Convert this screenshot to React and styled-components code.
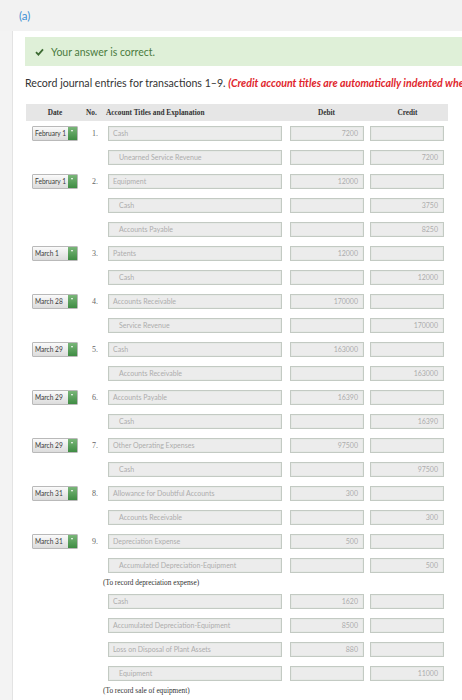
import React from "react";
import styled, { createGlobalStyle } from "styled-components";

const Global = createGlobalStyle`
  html, body { margin: 0; padding: 0; background: #f3f3f3; }
  body { font-family: Lato, "Open Sans", sans-serif; width: 462px; height: 700px; overflow: hidden; }
`;

const Page = styled.div`
  width: 462px;
  height: 700px;
  overflow: hidden;
  display: flex;
  flex-direction: column;
`;

const TopBand = styled.div`
  height: 31px;
  flex: none;
  display: flex;
  align-items: center;
  padding-left: 19px;
  background: #f2f2f2;
  color: #3d8fd4;
  font-size: 11.5px;
`;

const Panel = styled.div`
  flex: 1;
  margin-left: 12px;
  background: #fff;
  border-left: 1px solid #e3e3e3;
  padding: 6px 0 0 12px;
  white-space: nowrap;
  overflow: hidden;
`;

const Success = styled.div`
  height: 29px;
  margin-right: -40px;
  display: flex;
  align-items: center;
  gap: 7px;
  padding-left: 10px;
  background: #dff0d8;
  color: #4b7b3f;
  font-size: 10.5px;
`;

const Instruction = styled.div`
  margin-top: 10px;
  height: 14px;
  line-height: 14px;
  font-size: 10.6px;
  color: #333;
`;

const Red = styled.span`
  color: #e0262d;
  font-weight: 700;
  font-style: italic;
`;

const Table = styled.div`
  margin-top: 14px;
  margin-left: 1px;
  width: 422px;
  display: grid;
  grid-template-columns: 58px 22px 180px 81px 81px;
`;

const HeadCell = styled.div`
  height: 17px;
  background: #e6e6e6;
  display: flex;
  align-items: center;
  justify-content: ${(p) => p.$align || "center"};
  padding-left: ${(p) => p.$pl || 0}px;
  font-family: "Liberation Serif", "DejaVu Serif", serif;
  font-weight: 700;
  font-size: 7.3px;
  color: #333;
`;

const Cell = styled.div`
  height: 24px;
  box-sizing: border-box;
  padding-top: 5px;
  padding-left: ${(p) => p.$pl || 0}px;
  display: flex;
  align-items: flex-start;
`;

const Select = styled.div`
  width: 46px;
  height: 15px;
  box-sizing: border-box;
  margin-left: 6px;
  display: flex;
  border: 1px solid #b9b9b9;
  border-radius: 1px;
  background: linear-gradient(#fafafa, #dcdcdc);
  overflow: hidden;
`;

const SelectText = styled.span`
  flex: 1;
  font-size: 6.6px;
  line-height: 13px;
  padding-left: 2px;
  color: #3a3a3a;
`;

const SelectButton = styled.span`
  width: 9px;
  position: relative;
  background: linear-gradient(#79b679, #3f8c43);
  &::after {
    content: "";
    position: absolute;
    left: 3px;
    top: 3px;
    border-left: 1.5px solid transparent;
    border-right: 1.5px solid transparent;
    border-top: 2px solid #fff;
  }
`;

const Num = styled.span`
  width: 100%;
  line-height: 15px;
  padding-left: 8px;
  font-family: "Liberation Serif", "DejaVu Serif", serif;
  font-size: 8px;
  color: #666;
`;

const Field = styled.div`
  width: ${(p) => p.$w}px;
  height: 15px;
  box-sizing: border-box;
  border: 1px solid #c3cac3;
  box-shadow: inset 0 0 0 1px #e6e9e6;
  background: #ececec;
  font-size: 7px;
  line-height: 13px;
  color: #adadad;
  text-align: ${(p) => (p.$right ? "right" : "left")};
  padding: 0 ${(p) => (p.$right ? 5 : 0)}px 0 ${(p) => (p.$indent ? 10 : 4)}px;
  overflow: hidden;
`;

const Explanation = styled.div`
  grid-column: 3 / span 3;
  height: 12px;
  line-height: 12px;
  margin-left: -3px;
  font-family: "Liberation Serif", "DejaVu Serif", serif;
  font-size: 7.3px;
  color: #333;
`;

const Check = () => (
  <svg width="9" height="8" viewBox="0 0 9 8">
    <path d="M1 4.2 L3.4 6.6 L8 1.4" fill="none" stroke="#3d6b33" strokeWidth="1.8" />
  </svg>
);

const entries = [
  { date: "February 1", no: "1.", lines: [{ a: "Cash", d: "7200" }, { a: "Unearned Service Revenue", c: "7200" }] },
  { date: "February 1", no: "2.", lines: [{ a: "Equipment", d: "12000" }, { a: "Cash", c: "3750" }, { a: "Accounts Payable", c: "8250" }] },
  { date: "March 1", no: "3.", lines: [{ a: "Patents", d: "12000" }, { a: "Cash", c: "12000" }] },
  { date: "March 28", no: "4.", lines: [{ a: "Accounts Receivable", d: "170000" }, { a: "Service Revenue", c: "170000" }] },
  { date: "March 29", no: "5.", lines: [{ a: "Cash", d: "163000" }, { a: "Accounts Receivable", c: "163000" }] },
  { date: "March 29", no: "6.", lines: [{ a: "Accounts Payable", d: "16390" }, { a: "Cash", c: "16390" }] },
  { date: "March 29", no: "7.", lines: [{ a: "Other Operating Expenses", d: "97500" }, { a: "Cash", c: "97500" }] },
  { date: "March 31", no: "8.", lines: [{ a: "Allowance for Doubtful Accounts", d: "300" }, { a: "Accounts Receivable", c: "300" }] },
  {
    date: "March 31",
    no: "9.",
    lines: [
      { a: "Depreciation Expense", d: "500" },
      { a: "Accumulated Depreciation-Equipment", c: "500" },
      { expl: "(To record depreciation expense)" },
      { a: "Cash", d: "1620" },
      { a: "Accumulated Depreciation-Equipment", d: "8500" },
      { a: "Loss on Disposal of Plant Assets", d: "880" },
      { a: "Equipment", c: "11000" },
      { expl: "(To record sale of equipment)" },
    ],
  },
];

function Line({ entry, line, first }) {
  if (line.expl) return <Explanation>{line.expl}</Explanation>;
  return (
    <>
      <Cell>
        {first && (
          <Select>
            <SelectText>{entry.date}</SelectText>
            <SelectButton />
          </Select>
        )}
      </Cell>
      <Cell>{first && <Num>{entry.no}</Num>}</Cell>
      <Cell $pl={2}>
        <Field $w={174} $indent={!!line.c}>{line.a}</Field>
      </Cell>
      <Cell $pl={4}>
        <Field $w={74} $right>{line.d || ""}</Field>
      </Cell>
      <Cell $pl={3}>
        <Field $w={74} $right>{line.c || ""}</Field>
      </Cell>
    </>
  );
}

export default function App() {
  return (
    <Page>
      <Global />
      <TopBand>(a)</TopBand>
      <Panel>
        <Success>
          <Check />
          Your answer is correct.
        </Success>
        <Instruction>
          Record journal entries for transactions 1–9. <Red>(Credit account titles are automatically indented when amount is entered.)</Red>
        </Instruction>
        <Table>
          <HeadCell>Date</HeadCell>
          <HeadCell $align="flex-start" $pl={2}>No.</HeadCell>
          <HeadCell $align="flex-start">Account Titles and Explanation</HeadCell>
          <HeadCell>Debit</HeadCell>
          <HeadCell>Credit</HeadCell>
          {entries.map((e, i) =>
            e.lines.map((l, j) => <Line key={`${i}-${j}`} entry={e} line={l} first={j === 0} />)
          )}
        </Table>
      </Panel>
    </Page>
  );
}
